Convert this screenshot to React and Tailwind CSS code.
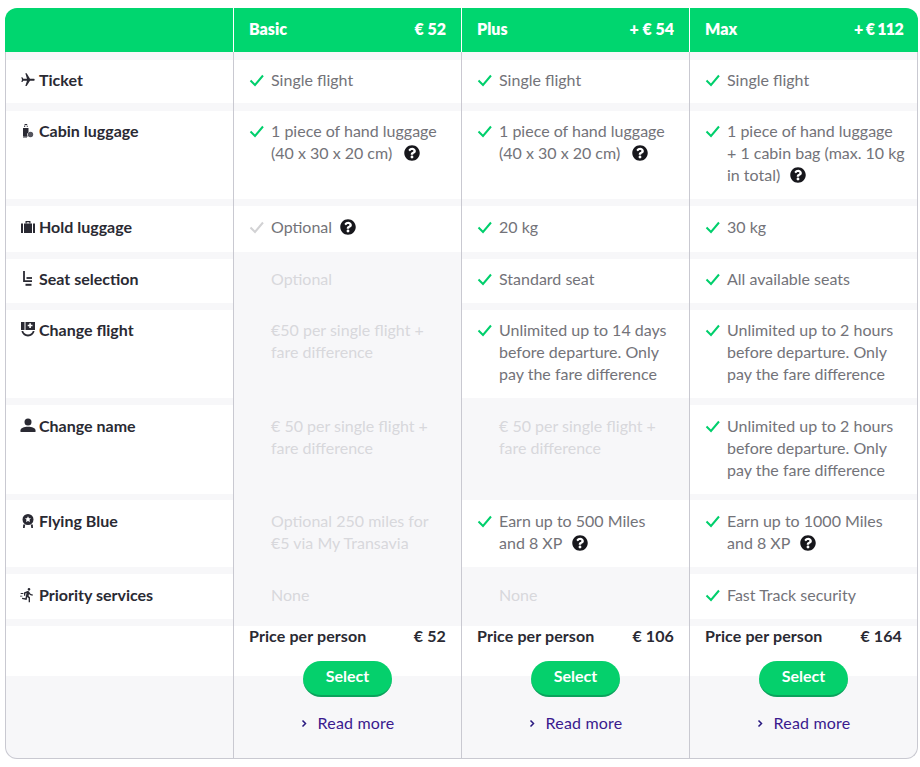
import React from "react";
import { FaQuestionCircle } from "react-icons/fa";

const Plane = () => (
  <svg viewBox="0 0 24 24" className="w-[16px] h-[16px]" fill="#2a2a33">
    <path transform="rotate(90 12 12)" d="M21 16v-2l-8-5V3.5c0-.83-.67-1.5-1.5-1.5S10 2.67 10 3.5V9l-8 5v2l8-2.5V19l-2 1.500V22l3.500-1 3.500 1v-1.500L13 19v-5.500l8 2.500z" />
  </svg>
);
const Cabin = () => (
  <svg viewBox="0 0 16 16" className="w-[16px] h-[16px]" fill="#2a2a33">
    <path d="M5.200 2h1.600v2h1v-.8h-.6V1H4.600v2.200H4v.8h1.200zM3 5h5.500v4.200a3 3 0 0 0-.6 4.300H6.500V15h-1v-1.500h-1V15h-1v-1.500L3 13z" />
    <circle cx="10.500" cy="11.500" r="2.700" fill="#55555e" />
  </svg>
);
const Hold = () => (
  <svg viewBox="0 0 16 16" className="w-[16px] h-[16px]" fill="#2a2a33">
    <rect x="1" y="4.500" width="2" height="9.500" />
    <rect x="4" y="4.500" width="8" height="9.500" />
    <rect x="13" y="4.500" width="2" height="9.500" />
    <path d="M5.500 4.500V2h5v2.500H9.300V3.200H6.700v1.300z" />
  </svg>
);
const Seat = () => (
  <svg viewBox="0 0 16 16" className="w-[16px] h-[16px]" fill="none" stroke="#2a2a33" strokeWidth="1.800">
    <path d="M4 0v10.200h8" />
    <path d="M6.500 7H12" />
    <path d="M5.500 13.800h6" strokeWidth="2" />
  </svg>
);
const Change = () => (
  <svg viewBox="0 0 16 16" className="w-[16px] h-[16px]" fill="#2a2a33">
    <path d="M1 0h3.500v8H1zM5.500 0H15v8H5.500z" />
    <path d="M9.300 1.200h1.600v1.600h1.600v1.500h-1.600v1.600H9.300V4.300H7.700V2.800h1.600z" fill="#fff" />
    <path d="M1.500 9h1.700c.6 2.200 2.500 3.600 4.800 3.600s4.200-1.400 4.800-3.600h1.700c-.6 3.200-3.200 5.400-6.500 5.400S2.100 12.200 1.500 9z" />
  </svg>
);
const Person = () => (
  <svg viewBox="0 0 16 16" className="w-[16px] h-[16px]" fill="#2a2a33">
    <circle cx="8" cy="4.100" r="3.500" />
    <path d="M.5 14v-1.800C.5 10.400 4 8.800 8 8.800s7.500 1.600 7.500 3.400V14z" />
  </svg>
);
const Blue = () => (
  <svg viewBox="0 0 16 16" className="w-[16px] h-[16px]" fill="#2a2a33">
    <path fillRule="evenodd" d="M8 1a5.500 5.500 0 1 1 0 11A5.500 5.500 0 0 1 8 1zm0 2.300-1 2H5l1.500 1.500L6 9l2-1 2 1-.5-2.200L11 5.300H9z" />
    <path d="M3.200 11.500h2L4.700 15H3zM10.800 11.500h2l.200 3.500h-1.700z" />
  </svg>
);
const Run = () => (
  <svg viewBox="0 0 24 24" className="w-[16px] h-[16px]" fill="#2a2a33">
    <path d="M13.490 5.480c1.100 0 2-.9 2-2s-.9-2-2-2-2 .9-2 2 .9 2 2 2zm-3.600 13.900l1-4.400 2.100 2v6h2v-7.500l-2.100-2 .6-3c1.300 1.500 3.300 2.500 5.500 2.500v-2c-1.900 0-3.500-1-4.300-2.400l-1-1.600c-.4-.6-1-1-1.700-1-.3 0-.5.100-.8.100l-5.200 2.200v4.700h2v-3.400l1.800-.7-1.600 8.100-4.900-1-.4 2 7 1.400z" />
    <path d="M1 9h4v1.400H1zM0 13h3.500v1.400H0z" />
  </svg>
);

const Check = ({ muted }) => (
  <svg viewBox="0 0 16 16" className="w-[16px] h-[16px] shrink-0 mt-[3px]" fill="none" stroke={muted ? "#d2d2d4" : "#00cf6c"} strokeWidth="2">
    <path d="M1.500 8.500 6 13 14 3.500" />
  </svg>
);

const Help = ({ cls }) => (
  <FaQuestionCircle className={`inline-block w-[16px] h-[16px] align-[-2px] text-[#17171c] ${cls}`} />
);

const rows = [
  {
    label: "Ticket", icon: <Plane />, gap: "h-[8px]", cell: "h-[43px]", pad: "pt-[9px]",
    cells: [
      { s: "on", t: "Single flight" },
      { s: "on", t: "Single flight" },
      { s: "on", t: "Single flight" },
    ],
  },
  {
    label: "Cabin luggage", icon: <Cabin />, gap: "h-[8px]", cell: "h-[88px]", pad: "pt-[9px]",
    cells: [
      { s: "on", t: <>1 piece of hand luggage<br />(40 x 30 x 20 cm)</>, help: "ml-[12px]" },
      { s: "on", t: <>1 piece of hand luggage<br />(40 x 30 x 20 cm)</>, help: "ml-[12px]" },
      { s: "on", t: <>1 piece of hand luggage<br />+ 1 cabin bag (max. 10 kg<br />in total)</>, help: "ml-[10px]" },
    ],
  },
  {
    label: "Hold luggage", icon: <Hold />, gap: "h-[7px]", cell: "h-[46px]", pad: "pt-[10px]",
    cells: [
      { s: "muted", t: "Optional", help: "ml-[8px]" },
      { s: "on", t: "20 kg" },
      { s: "on", t: "30 kg" },
    ],
  },
  {
    label: "Seat selection", icon: <Seat />, gap: "h-[7px]", cell: "h-[44px]", pad: "pt-[9px]",
    cells: [
      { s: "off", t: "Optional" },
      { s: "on", t: "Standard seat" },
      { s: "on", t: "All available seats" },
    ],
  },
  {
    label: "Change flight", icon: <Change />, gap: "h-[7px]", cell: "h-[88px]", pad: "pt-[9px]",
    cells: [
      { s: "off", t: <>€50 per single flight +<br />fare difference</> },
      { s: "on", t: <>Unlimited up to 14 days<br />before departure. Only<br />pay the fare difference</> },
      { s: "on", t: <>Unlimited up to 2 hours<br />before departure. Only<br />pay the fare difference</> },
    ],
  },
  {
    label: "Change name", icon: <Person />, gap: "h-[7px]", cell: "h-[89px]", pad: "pt-[10px]",
    cells: [
      { s: "off", t: <>€ 50 per single flight +<br />fare difference</> },
      { s: "off", t: <>€ 50 per single flight +<br />fare difference</> },
      { s: "on", t: <>Unlimited up to 2 hours<br />before departure. Only<br />pay the fare difference</> },
    ],
  },
  {
    label: "Flying Blue", icon: <Blue />, gap: "h-[6px]", cell: "h-[67px]", pad: "pt-[10px]",
    cells: [
      { s: "off", t: <>Optional 250 miles for<br />€5 via My Transavia</> },
      { s: "on", t: <>Earn up to 500 Miles<br />and 8 XP</>, help: "ml-[10px]" },
      { s: "on", t: <>Earn up to 1000 Miles<br />and 8 XP</>, help: "ml-[10px]" },
    ],
  },
  {
    label: "Priority services", icon: <Run />, gap: "h-[7px]", cell: "h-[45px]", pad: "pt-[10px]",
    cells: [
      { s: "off", t: "None" },
      { s: "off", t: "None" },
      { s: "on", t: "Fast Track security" },
    ],
  },
];

const Row = ({ row }) => (
  <div className="grid grid-cols-[228px_228px_228px_227px]">
    <div className="border-r border-[#c9c9d1]">
      <div className={row.gap} />
      <div className={`${row.cell} ${row.pad} bg-white flex items-start gap-[3px] pl-[14px] text-[16px] leading-[22px] font-bold text-[#2a2a33]`}>
        <span className="mt-[3px] shrink-0">{row.icon}</span>
        <span>{row.label}</span>
      </div>
    </div>
    {row.cells.map((c, i) => (
      <div key={i} className={i < 2 ? "border-r border-[#c9c9d1]" : ""}>
        <div className={row.gap} />
        <div
          className={`${row.cell} ${row.pad} ${c.s === "off" ? "" : "bg-white"} flex items-start gap-[6px] pl-[15px] text-[16px] leading-[22px] ${
            c.s === "off" ? "text-[#d8d8dc]" : "text-[#737379]"
          }`}
        >
          {c.s === "off" ? <span className="w-[16px] shrink-0" /> : <Check muted={c.s === "muted"} />}
          <span>
            {c.t}
            {c.help && <Help cls={c.help} />}
          </span>
        </div>
      </div>
    ))}
  </div>
);

const plans = [
  { name: "Basic", add: "€ 52", price: "€ 52", addCls: "" },
  { name: "Plus", add: "+ € 54", price: "€ 106", addCls: "" },
  { name: "Max", add: "+ € 112", price: "€ 164", addCls: "tracking-[-0.7px]" },
];

export default function App() {
  return (
    <div className="bg-white w-[920px] h-[767px] pt-[8px] pl-[5px] font-['Lato','Liberation_Sans',sans-serif]">
      <div className="w-[913px]">
        <div className="grid grid-cols-[229px_228px_228px_228px] h-[44px] bg-[#00d66f] rounded-t-[12px] text-white">
          <div className="border-r border-white" />
          {plans.map((p, i) => (
            <div key={p.name} className={`flex items-center justify-between pl-[15px] pr-[15px] pb-[2px] text-[16px] font-extrabold ${i < 2 ? "border-r border-white" : ""}`}>
              <span>{p.name}</span>
              <span className={p.addCls}>{p.add}</span>
            </div>
          ))}
        </div>
        <div className="bg-[#f7f7f9] border-x border-b border-[#c9c9d1] rounded-b-[12px] w-[913px] overflow-hidden">
          {rows.map((r) => (
            <Row key={r.label} row={r} />
          ))}
          <div className="grid grid-cols-[228px_228px_228px_227px] h-[139px]">
            <div className="border-r border-[#c9c9d1]">
              <div className="h-[7px]" />
              <div className="h-[50px] bg-white" />
            </div>
            {plans.map((p, i) => (
              <div key={p.name} className={i < 2 ? "border-r border-[#c9c9d1]" : ""}>
                <div className="h-[7px]" />
                <div className="h-[50px] bg-white flex justify-between pl-[15px] pr-[15px] text-[16px] tracking-[0.1px] leading-[20px] font-bold text-[#2a2a33]">
                  <span>Price per person</span>
                  <span>{p.price}</span>
                </div>
                <div className="flex flex-col items-center">
                  <button className="relative -mt-[15px] w-[89px] h-[36px] rounded-full bg-[#05d06c] border-b-2 border-[#0aa35c] text-white text-[16px] font-bold pb-[4px]">
                    Select
                  </button>
                  <a className="mt-[15px] flex items-center gap-[11px] text-[16px] tracking-[0.2px] leading-[22px] text-[#3a1a8e]">
                    <svg viewBox="0 0 8 10" className="w-[6px] h-[9px]" fill="none" stroke="#2a1a80" strokeWidth="2"><path d="M2 1l4 4-4 4" /></svg>
                    Read more
                  </a>
                </div>
              </div>
            ))}
          </div>
        </div>
      </div>
    </div>
  );
}
